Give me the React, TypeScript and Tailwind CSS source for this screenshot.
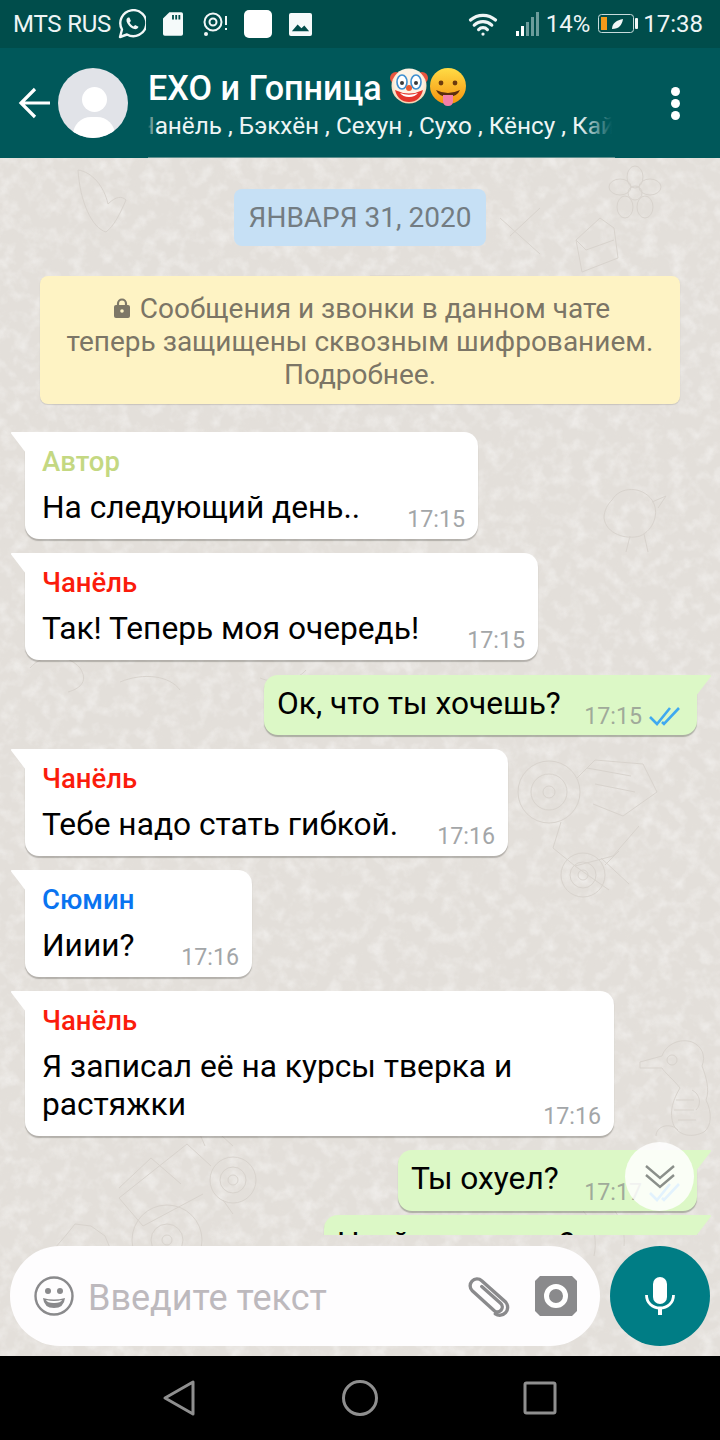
import type { ReactNode } from "react";
import { Wifi } from "lucide-react";

function Wallpaper() {
  return (
    <svg
      className="pointer-events-none absolute inset-0 h-full w-full"
      viewBox="0 0 720 1282"
      fill="none"
      stroke="#d8d3cd"
      strokeWidth="1"
    >
      <defs>
        <filter id="light" x="0" y="0" width="100%" height="100%">
          <feTurbulence type="fractalNoise" baseFrequency="0.07" numOctaves="3" seed="7" />
          <feColorMatrix values="0 0 0 0 1  0 0 0 0 1  0 0 0 0 1  2.4 0 0 0 -1.05" />
        </filter>
        <filter id="dark" x="0" y="0" width="100%" height="100%">
          <feTurbulence type="fractalNoise" baseFrequency="0.09" numOctaves="3" seed="21" />
          <feColorMatrix values="0 0 0 0 0.78  0 0 0 0 0.75  0 0 0 0 0.71  2.2 0 0 0 -1" />
        </filter>
      </defs>
      <rect width="720" height="1282" filter="url(#light)" stroke="none" opacity="0.4" />
      <rect width="720" height="1282" filter="url(#dark)" stroke="none" opacity="0.3" />

      {/* flower, top right */}
      <g transform="translate(635 35)">
        <circle r="7" />
        <ellipse cy="-16" rx="8" ry="11" />
        <ellipse cx="15" cy="-6" rx="11" ry="8" />
        <ellipse cx="10" cy="14" rx="8" ry="11" />
        <ellipse cx="-10" cy="14" rx="8" ry="11" />
        <ellipse cx="-15" cy="-6" rx="11" ry="8" />
      </g>
      {/* butterfly, top left */}
      <path d="M78 12c14 2 26 16 30 34 8-8 14-8 18-4-6 14-12 26-20 32-14-4-26-30-28-62z" />
      <path d="M500 60l40 36M540 50l-30 28M600 60l-24 22 6 32 36-14-4-30z M576 82l10 10 28-10" />
      <path d="M370 118h40l4 42M378 118l-6 42M452 120c8 6 10 22 4 40" />
      {/* chicken, right */}
      <path d="M612 342c8-14 30-14 40 0 8 12 2 30-12 36-14 4-34-2-36-18 0-8 4-14 8-18zM630 378l-4 16M644 376l4 18M652 344l14-6-8 12" />
      <path d="M30 510c14-16 38-14 50 0 8 12 2 20-12 24" />
      <path d="M120 524c24-10 50-6 60 8M260 520c14 6 36 4 46-8" />
      {/* gear machine under the sent message */}
      <g transform="translate(549 634)">
        <circle r="31" />
        <circle r="18" />
        <circle r="6" />
        <path d="M28-14l18-18 48 4 14 28-34 24-30-12" />
        <path d="M38-24l44 8M46-8l40 8" />
        <path d="M12 30l-8 26 22 18 38-10 26-30M26 74l34 24M52 66l28 26" />
      </g>
      {/* snail */}
      <g transform="translate(583 717)">
        <circle r="22" />
        <circle r="13" />
        <circle r="5" />
        <path d="M22-10l14-14" />
      </g>
      {/* seahorse */}
      <g transform="translate(640 880)">
        <path d="M0 24L22 18C26 6 40 0 52 4C62 8 66 18 62 28C66 38 70 52 66 62C72 74 72 88 64 94C52 100 40 98 34 88C28 74 34 60 40 50C34 42 24 34 22 30L0 30z" />
        <circle cx="32" cy="22" r="5" />
        <path d="M38 92c-8-8-22-4-22 6M36 62h18M34 72h20M38 82h18M52 52c8 4 10 14 4 20" />
      </g>
      {/* tractor, bottom left */}
      <g transform="translate(233 1022)">
        <circle r="23" />
        <circle r="13" />
        <circle r="5" />
        <path d="M-22-14l-24-22-68 54 24 28 60-32M-52 4l-30-26-32 30M-28-34l-6-14 12-6 22 20M-10 20l10 14" />
      </g>
      <g transform="translate(167 1082)">
        <circle r="35" />
        <circle r="16" />
        <circle r="5" />
      </g>
      <path d="M55 1090l12-14 8-10 16 2 14 10 10 24H52z" />
      <path d="M560 1040c24 4 40 30 34 58M600 1040c16 8 26 28 24 48" />
    </svg>
  );
}

function Tail({ side, color }: { side: "left" | "right"; color: string }) {
  return (
    <svg
      className={side === "left" ? "absolute left-[-15px] top-0" : "absolute right-[-15px] top-0"}
      width="16"
      height="24"
      viewBox="0 0 16 24"
    >
      <path d={side === "left" ? "M16 0H2Q0 0 1.5 2L16 21z" : "M0 0H14Q16 0 14.5 2L0 21z"} fill={color} />
    </svg>
  );
}

function Incoming({
  name,
  nameClass,
  width,
  time,
  mt,
  children,
}: {
  name: string;
  nameClass: string;
  width: string;
  time: string;
  mt: string;
  children: ReactNode;
}) {
  return (
    <div className={`relative ml-[25px] rounded-b-[14px] rounded-tr-[14px] bg-white px-[17px] pt-[14px] pb-[12px] shadow-[0_2px_1px_rgba(90,85,80,0.35)] ${width} ${mt}`}>
      <Tail side="left" color="#ffffff" />
      <p className={`text-[27.5px] leading-[31px] font-medium ${nameClass}`}>{name}</p>
      <p className="mt-[12px] text-[31.7px] leading-[38px] text-black">{children}</p>
      <span className="absolute right-[13px] bottom-[6px] text-[23.2px] leading-[27px] text-[#a3a6a8]">{time}</span>
    </div>
  );
}

function DoubleCheck({ className }: { className: string }) {
  return (
    <svg className={className} width="32" height="20" viewBox="0 0 32 20" fill="none" stroke="currentColor" strokeWidth="2.6">
      <path d="M1 11l7 7L21 2" />
      <path d="M13 16l2 2L30 2" />
    </svg>
  );
}

function Outgoing({ size, mt, children, time }: { size: string; mt: string; children: ReactNode; time: string }) {
  return (
    <div className={`relative mr-[23px] ml-auto rounded-b-[14px] rounded-tl-[14px] bg-[#dcf8c6] pl-[13px] pt-[10px] shadow-[0_2px_1px_rgba(90,100,80,0.4)] ${size} ${mt}`}>
      <Tail side="right" color="#dcf8c6" />
      <p className="text-[31.7px] leading-[38px] text-black">{children}</p>
      <span className="absolute right-[55px] bottom-[5px] text-[23.2px] leading-[27px] text-[#a0aa9a]">{time}</span>
      <DoubleCheck className="absolute right-[16px] bottom-[9px] text-[#3fa9f0]" />
    </div>
  );
}

function ClownEmoji() {
  return (
    <svg width="38" height="36" viewBox="0 0 38 36">
      <defs>
        <radialGradient id="clownFace" cx="0.5" cy="0.4" r="0.65">
          <stop offset="0.6" stopColor="#fdf3e4" />
          <stop offset="1" stopColor="#f2c9a0" />
        </radialGradient>
      </defs>
      <circle cx="6" cy="10" r="6" fill="#e8553f" />
      <circle cx="32" cy="10" r="6" fill="#e8553f" />
      <circle cx="19" cy="18" r="17.500" fill="url(#clownFace)" />
      <ellipse cx="12" cy="14" rx="5" ry="7" fill="#fff" stroke="#3f8fd0" strokeWidth="1.600" />
      <ellipse cx="26" cy="14" rx="5" ry="7" fill="#fff" stroke="#3f8fd0" strokeWidth="1.600" />
      <circle cx="12" cy="15" r="2" fill="#3a3a3a" />
      <circle cx="26" cy="15" r="2" fill="#3a3a3a" />
      <path d="M5 22q14 7 28 0q-3 12 -14 12t-14 -12z" fill="#e5352b" />
      <path d="M10 25q9 3.500 18 0q-3 4 -9 4t-9 -4z" fill="#fff" />
      <circle cx="19" cy="20" r="3" fill="#ee5a32" />
    </svg>
  );
}

function TongueEmoji() {
  return (
    <svg width="36" height="38" viewBox="0 0 36 38">
      <defs>
        <linearGradient id="tongueFace" x1="0" y1="0" x2="0" y2="1">
          <stop offset="0" stopColor="#ffdc45" />
          <stop offset="1" stopColor="#f5930f" />
        </linearGradient>
      </defs>
      <circle cx="18" cy="18" r="18" fill="url(#tongueFace)" />
      <circle cx="11" cy="15" r="2.400" fill="#6b3a0e" />
      <circle cx="25" cy="15" r="2.400" fill="#6b3a0e" />
      <path d="M6 22q12 6 24 0q-3 7 -12 7t-12 -7z" fill="#5b2d0e" />
      <path d="M13 27h10v6q0 5 -5 5t-5 -5z" fill="#f47fa8" />
    </svg>
  );
}

function StatusBar() {
  return (
    <div className="flex h-[48px] items-center bg-[#004d4b] pl-[13px] pr-[17px] text-[24px] text-[#eef5f5]">
      <span className="tracking-[-0.2px]">MTS RUS</span>
      <svg className="ml-[7px]" width="28" height="30" viewBox="0 0 28 30" fill="none">
        <path d="M2 28l2-7.500A13 13 0 1 1 9 25.500z" stroke="#f2f7f7" strokeWidth="2.400" strokeLinejoin="round" />
        <path d="M10 8.500c-1.800 1.200-2 3.200-.6 5.800 1.500 2.800 4 5 6.800 5.800 2 .6 3.800-.6 4.300-2.400l-3.400-1.700-1.500 1.500c-1.800-.8-3.200-2.200-4-4l1.300-1.500-1.500-3.500z" fill="#f2f7f7" />
      </svg>
      <svg className="ml-[17px]" width="20" height="26" viewBox="0 0 22 26">
        <path d="M7 0h13a2 2 0 0 1 2 2v22a2 2 0 0 1-2 2H2a2 2 0 0 1-2-2V7z" fill="#f5fafa" />
        <path d="M11 3v5M14.500 3v5M18 3v5" stroke="#004d4b" strokeWidth="2" />
      </svg>
      <svg className="ml-[20px]" width="26" height="26" viewBox="0 0 26 26" fill="none" stroke="#f2f7f7">
        <circle cx="10" cy="11" r="8.500" strokeWidth="2" />
        <circle cx="10" cy="11" r="3.500" strokeWidth="2" />
        <circle cx="3" cy="23" r="2" fill="#f2f7f7" stroke="none" />
        <path d="M23 5v9M23 17v2" strokeWidth="2" />
      </svg>
      <div className="ml-[15px] h-[28px] w-[28px] rounded-[5px] bg-white" />
      <svg className="ml-[17px]" width="23" height="23" viewBox="0 0 24 24">
        <rect width="24" height="24" rx="2" fill="#f5fafa" />
        <path d="M3 19l6-7 4 4 3-3 5 6z" fill="#004d4b" />
      </svg>
      <div className="ml-auto flex items-center">
        <Wifi size={30} strokeWidth={2.600} className="mr-[18px]" />
        <svg className="mr-[7px]" width="23" height="24" viewBox="0 0 23 24">
          <rect x="0" y="19" width="3" height="5" fill="#fff" />
          <rect x="5" y="14" width="3" height="10" fill="#fff" />
          <rect x="10" y="10" width="3" height="14" fill="#6c9c9b" />
          <rect x="15" y="5" width="3" height="19" fill="#6c9c9b" />
          <rect x="20" y="0" width="3" height="24" fill="#6c9c9b" />
        </svg>
        <span className="mr-[8px]">14%</span>
        <svg className="mr-[5px]" width="40" height="20" viewBox="0 0 40 20">
          <rect x="0.500" y="0.500" width="35" height="18" rx="3" fill="none" stroke="#c8dcdc" />
          <rect x="3" y="3" width="6" height="13" fill="#f49a1a" />
          <path d="M14 15c0-6 5-9 11-10-1 6-4 10-11 10z" fill="#f2f7f7" />
          <rect x="37" y="4" width="3" height="11" rx="1" fill="#f2f7f7" />
        </svg>
        <span>17:38</span>
      </div>
    </div>
  );
}

function Header() {
  return (
    <div className="relative flex h-[110px] items-center bg-[#00585a] text-white">
      <svg className="ml-[18px] shrink-0" width="32" height="32" viewBox="0 0 32 32" fill="none" stroke="#fff" strokeWidth="3.200">
        <path d="M32 16H3M17 2L3 16l14 14" />
      </svg>
      <div className="relative ml-[8px] h-[70px] w-[70px] shrink-0 overflow-hidden rounded-full bg-[#e1e3e8]">
        <div className="absolute top-[19px] left-[24px] h-[25px] w-[25px] rounded-full bg-white" />
        <div className="absolute top-[49px] left-[15px] h-[36px] w-[42px] rounded-full bg-white" />
      </div>
      <div className="ml-[20px] min-w-0 pt-[4px]">
        <div className="flex h-[40px] items-center">
          <span className="text-[34.2px] font-medium leading-[40px]">EXO и Гопница</span>
          <span className="ml-[8px] flex gap-[2px] pb-[2px]">
            <ClownEmoji />
            <TongueEmoji />
          </span>
        </div>
        <div className="relative mt-[2px] h-[32px] w-[464px] overflow-hidden">
          <p className="-ml-[10px] whitespace-nowrap text-[24.3px] leading-[32px] text-[#eef5f5]">
            Чанёль , Бэкхён , Сехун , Сухо , Кёнсу , Кай
          </p>
          <div className="absolute inset-y-0 left-0 w-[8px] bg-gradient-to-r from-[#00585a] to-transparent" />
          <div className="absolute inset-y-0 right-0 w-[32px] bg-gradient-to-l from-[#00585a] to-transparent" />
        </div>
      </div>
      <div className="absolute top-[39px] right-[40px] flex flex-col gap-[3px]">
        <div className="h-[9px] w-[9px] rounded-full bg-white" />
        <div className="h-[9px] w-[9px] rounded-full bg-white" />
        <div className="h-[9px] w-[9px] rounded-full bg-white" />
      </div>
      <div className="absolute bottom-0 left-[148px] h-px w-[467px] bg-[#5f8f8e]" />
    </div>
  );
}

function Messages() {
  return (
    <div className="h-[1077px] overflow-hidden">
      <div className="mt-[31px] flex justify-center">
        <div className="flex h-[57px] w-[252px] items-center justify-center rounded-[8px] bg-[#c6e0f5] text-[28px] text-[#737c82]">
          ЯНВАРЯ 31, 2020
        </div>
      </div>
      <div className="mx-[40px] mt-[30px] h-[128px] rounded-[8px] bg-[#fef3c4] pt-[16px] text-center text-[28px] leading-[33px] text-[#7b7566] shadow-[0_1px_1px_rgba(90,85,80,0.2)]">
        <svg className="mr-[10px] ml-[4px] mb-[6px] inline-block" width="16" height="20" viewBox="0 0 16 20">
          <path d="M4 8V5.500a4 4 0 0 1 8 0V8" fill="none" stroke="#7d7767" strokeWidth="2.200" />
          <rect y="7" width="16" height="13" rx="2" fill="#7d7767" />
          <circle cx="8" cy="13" r="1.800" fill="#fef3c4" />
        </svg>
        Сообщения и звонки в данном чате
        <br />
        теперь защищены сквозным шифрованием.
        <br />
        Подробнее.
      </div>
      <Incoming name="Автор" nameClass="text-[#c4d882]" width="w-[453px]" time="17:15" mt="mt-[28px]">
        На следующий день..
      </Incoming>
      <Incoming name="Чанёль" nameClass="text-[#fb1c0c]" width="w-[513px]" time="17:15" mt="mt-[14px]">
        Так! Теперь моя очередь!
      </Incoming>
      <Outgoing size="h-[60px] w-[433px]" time="17:15" mt="mt-[15px]">
        Ок, что ты хочешь?
      </Outgoing>
      <Incoming name="Чанёль" nameClass="text-[#fb1c0c]" width="w-[483px]" time="17:16" mt="mt-[14px]">
        Тебе надо стать гибкой.
      </Incoming>
      <Incoming name="Сюмин" nameClass="text-[#0a74f0]" width="w-[227px]" time="17:16" mt="mt-[14px]">
        Ииии?
      </Incoming>
      <Incoming name="Чанёль" nameClass="text-[#fb1c0c]" width="w-[589px]" time="17:16" mt="mt-[14px]">
        Я записал её на курсы тверка и
        <br />
        растяжки
      </Incoming>
      <Outgoing size="h-[61px] w-[299px]" time="17:17" mt="mt-[14px]">
        Ты охуел?
      </Outgoing>
      <Outgoing size="h-[60px] w-[373px]" time="17:17" mt="mt-[4px]">
        Но, йога нужна?
      </Outgoing>
    </div>
  );
}

function InputRow() {
  return (
    <div className="mt-[11px] flex items-start pl-[10px]">
      <div className="flex h-[100px] w-[590px] items-center rounded-full bg-[#fefdfe] pl-[24px]">
        <svg width="40" height="40" viewBox="0 0 40 40" fill="none">
          <circle cx="20" cy="20" r="18.500" stroke="#8a8a8c" strokeWidth="2.400" />
          <circle cx="14" cy="15" r="3" fill="#8a8a8c" />
          <circle cx="26" cy="15" r="3" fill="#8a8a8c" />
          <path d="M9 22q11 3 22 0q-1 10 -11 10t-11 -10z" fill="#8a8a8c" />
          <path d="M12 24q8 2 16 0q-1 3 -8 3t-8 -3z" fill="#fff" />
        </svg>
        <span className="ml-[14px] pt-[4px] text-[36px] text-[#bdb9bd]">Введите текст</span>
        <svg className="ml-auto" width="44" height="42" viewBox="0 0 42 40" fill="none" stroke="#8a8a8c" strokeWidth="3.200" strokeLinecap="round">
          <path d="M15 10L33 26a4.500 4.500 0 0 1-6 7L6 14A6.500 6.500 0 0 1 15 4.500L38 25a7.500 7.500 0 0 1-10 11" transform="translate(0 1)" />
        </svg>
        <svg className="mr-[23px] ml-[25px]" width="42" height="40" viewBox="0 0 42 40">
          <path d="M5 0H37L42 5V35L37 40H5L0 35V5z" fill="#8a8a8c" />
          <circle cx="21" cy="20" r="9.500" fill="#8a8a8c" stroke="#fff" strokeWidth="5" />
        </svg>
      </div>
      <div className="ml-[10px] flex h-[100px] w-[100px] items-center justify-center rounded-full bg-[#007d85]">
        <svg width="30" height="38" viewBox="0 0 30 38" fill="none">
          <rect x="8" y="0" width="14" height="27" rx="7" fill="#fff" />
          <path d="M1.500 18c0 8 6 13 13.500 13s13.500-5 13.500-13" stroke="#fff" strokeWidth="2.800" />
          <rect x="13" y="30" width="4" height="8" fill="#fff" />
        </svg>
      </div>
    </div>
  );
}

function NavBar() {
  return (
    <div className="mt-[10px] flex h-[84px] items-center justify-center gap-[144px] bg-black">
      <svg width="36" height="38" viewBox="0 0 36 38" fill="none" stroke="#8f8f8f" strokeWidth="3" strokeLinejoin="round">
        <path d="M31 3V35L3 19z" />
      </svg>
      <svg width="36" height="36" viewBox="0 0 36 36" fill="none" stroke="#8f8f8f" strokeWidth="3">
        <circle cx="18" cy="18" r="16.500" />
      </svg>
      <svg width="36" height="36" viewBox="0 0 36 36" fill="none" stroke="#8f8f8f" strokeWidth="3">
        <rect x="3" y="3" width="30" height="30" rx="1.500" />
      </svg>
    </div>
  );
}

export default function App() {
  return (
    <div className="flex h-[1440px] w-[720px] flex-col overflow-hidden bg-[#e3dfda] font-['Roboto',sans-serif]">
      <StatusBar />
      <Header />
      <div className="relative flex-1">
        <Wallpaper />
        <div className="relative">
          <Messages />
          <InputRow />
          <NavBar />
        </div>
        {/* scroll to bottom button */}
        <div className="absolute top-[984px] left-[625px] flex h-[69px] w-[69px] items-center justify-center rounded-full bg-white/85">
          <svg width="32" height="26" viewBox="0 0 32 26" fill="none" stroke="#8a8f8a" strokeWidth="2.400">
            <path d="M2 2l14 12L30 2" />
            <path d="M2 11l14 12L30 11" />
          </svg>
        </div>
      </div>
    </div>
  );
}
